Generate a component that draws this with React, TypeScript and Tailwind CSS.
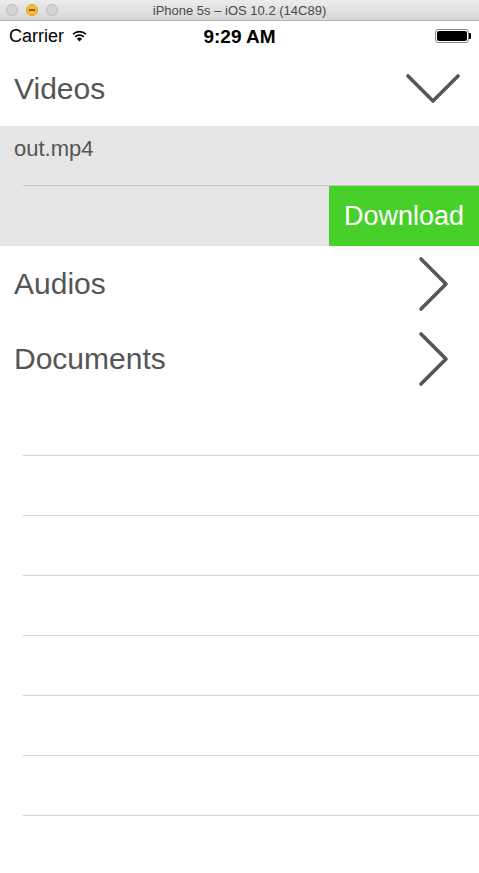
import React from "react";

const font = { fontFamily: '"Liberation Sans", Arial, sans-serif' };

function ChevronRight() {
  return (
    <svg width="34" height="56" viewBox="0 0 34 56" className="block">
      <path d="M5 3 L30 28 L5 53" fill="none" stroke="#555555" strokeWidth="3.6" strokeLinecap="round" strokeLinejoin="round" />
    </svg>
  );
}

function ChevronDown() {
  return (
    <svg width="56" height="32" viewBox="0 0 56 32" className="block">
      <path d="M3 4 L28 29 L53 4" fill="none" stroke="#555555" strokeWidth="3.6" strokeLinecap="round" strokeLinejoin="round" />
    </svg>
  );
}

function Wifi() {
  return (
    <svg width="15" height="12" viewBox="0 0 16 13" className="block">
      <path d="M8 12.5 L5.2 9.4 A4 4 0 0 1 10.8 9.4 Z" fill="#000" />
      <path d="M3.4 7.4 A6.6 6.6 0 0 1 12.6 7.4" fill="none" stroke="#000" strokeWidth="1.8" />
      <path d="M1 4.6 A10 10 0 0 1 15 4.6" fill="none" stroke="#000" strokeWidth="1.8" />
    </svg>
  );
}

function Battery() {
  return (
    <div className="flex items-center">
      <div className="w-[34px] h-[14px] rounded-[3px] border border-[#8a8a8a] p-[1px]">
        <div className="w-full h-full bg-black rounded-[2px]" />
      </div>
      <div className="w-[2px] h-[6px] bg-black rounded-r-[1px]" />
    </div>
  );
}

export default function App() {
  const emptyRows = [0, 1, 2, 3, 4, 5, 6];
  return (
    <div className="w-[479px] h-[873px] bg-white overflow-hidden" style={font}>
      {/* Title bar */}
      <div className="relative h-[21px] bg-gradient-to-b from-[#ececec] to-[#d6d6d6] border-b border-[#b4b4b4] flex items-center justify-center">
        <div className="absolute left-[6px] top-[4px] flex gap-[8px]">
          <div className="w-[12px] h-[12px] rounded-full bg-[#d4d4d4] border border-[#bdbdbd]" />
          <div className="w-[12px] h-[12px] rounded-full bg-[#f5be35] border border-[#dca226] flex items-center justify-center">
            <div className="w-[6px] h-[1.5px] bg-[#8f5a0c]" />
          </div>
          <div className="w-[12px] h-[12px] rounded-full bg-[#d4d4d4] border border-[#bdbdbd]" />
        </div>
        <span className="text-[13px] text-[#4a4a4a] leading-none">iPhone 5s – iOS 10.2 (14C89)</span>
      </div>

      {/* Status bar */}
      <div className="relative h-[30px] flex items-center px-[9px]">
        <div className="flex items-center gap-[8px]">
          <span className="text-[18px] text-black leading-none">Carrier</span>
          <Wifi />
        </div>
        <span className="absolute left-0 right-0 text-center text-[19px] font-bold text-black leading-none pointer-events-none">9:29 AM</span>
        <div className="ml-auto mr-[-1px]">
          <Battery />
        </div>
      </div>

      {/* Videos header */}
      <div className="h-[75px] flex items-center justify-between pl-[14px] pr-[18px]">
        <span className="text-[30px] text-[#555555] leading-none">Videos</span>
        <div className="mb-[2px]">
          <ChevronDown />
        </div>
      </div>

      {/* Expanded cell */}
      <div className="bg-[#e6e6e6]">
        <div className="h-[60px] flex flex-col">
          <div className="flex-1 flex items-start pl-[14px] pt-[12px]">
            <span className="text-[22px] text-[#555555] leading-none">out.mp4</span>
          </div>
          <div className="ml-[23px] h-px bg-[#c8c8c8]" />
        </div>
        <div className="h-[60px] flex justify-end">
          <div className="w-[150px] h-full bg-[#48d02a] flex items-center justify-center">
            <span className="text-[27px] text-white leading-none">Download</span>
          </div>
        </div>
      </div>

      {/* Audios */}
      <div className="h-[75px] flex items-center justify-between pl-[14px] pr-[29px]">
        <span className="text-[30px] text-[#555555] leading-none">Audios</span>
        <ChevronRight />
      </div>

      {/* Documents */}
      <div className="h-[75px] flex items-center justify-between pl-[14px] pr-[29px]">
        <span className="text-[30px] text-[#555555] leading-none">Documents</span>
        <ChevronRight />
      </div>

      {/* Empty rows */}
      {emptyRows.map((i) => (
        <div key={i} className="h-[60px] flex flex-col justify-end">
          <div className="ml-[23px] h-px bg-[#d0d0d0]" />
        </div>
      ))}
    </div>
  );
}
